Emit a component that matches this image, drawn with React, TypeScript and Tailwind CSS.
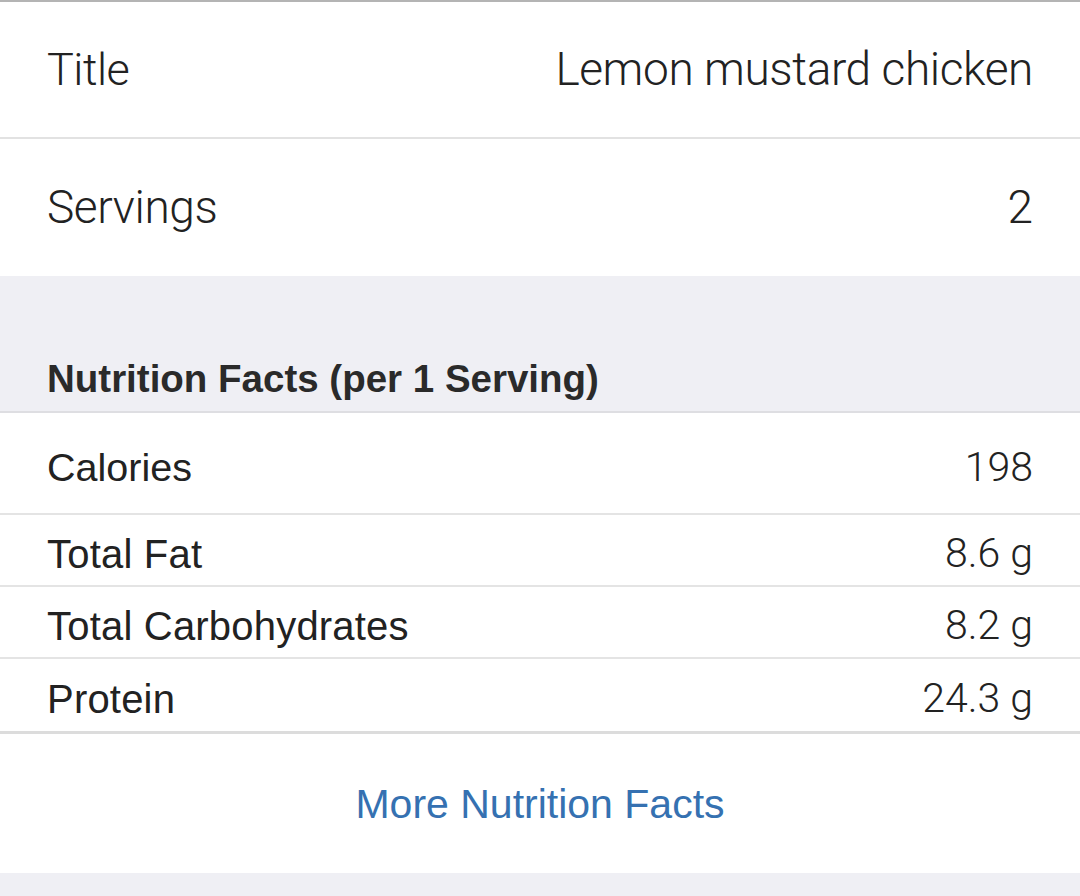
export default function App() {
  const facts = [
    { label: "Total Fat", value: "8.6 g" },
    { label: "Total Carbohydrates", value: "8.2 g" },
    { label: "Protein", value: "24.3 g" },
  ];

  return (
    <div className="w-[1080px] h-[896px] overflow-hidden bg-[#efeff4] text-[#222] font-['Liberation_Sans',Arial,sans-serif]">
      <div className="bg-white border-t-2 border-[#b4b4b4]">
        <div className="h-[137px] flex items-center justify-between px-[47px] border-b-2 border-[#e2e2e2]">
          <span className="text-[45px] font-light font-['Roboto',sans-serif] tracking-[-0.5px]">Title</span>
          <span className="text-[46px] font-light font-['Roboto',sans-serif] tracking-[-0.4px]">Lemon mustard chicken</span>
        </div>
        <div className="h-[137px] flex items-center justify-between px-[47px]">
          <span className="text-[46px] font-light font-['Roboto',sans-serif] tracking-[-0.4px]">Servings</span>
          <span className="text-[46px] font-light font-['Roboto',sans-serif]">2</span>
        </div>
      </div>

      <div className="h-[137px] flex items-end px-[47px] pb-[13px] border-b-2 border-[#dedee2]">
        <span className="text-[38.5px] font-bold text-[#2a2a2a] leading-none">Nutrition Facts (per 1 Serving)</span>
      </div>

      <div className="bg-white">
        <div className="h-[102px] flex items-center justify-between px-[47px] border-b-2 border-[#e4e4e4] pt-[10px]">
          <span className="text-[39.5px]">Calories</span>
          <span className="text-[41px] font-light font-['Roboto',sans-serif]">198</span>
        </div>
        {facts.map((f, i) => (
          <div
            key={f.label}
            className={
              i < facts.length - 1
                ? "h-[72px] flex items-center justify-between px-[47px] border-b-2 border-[#e4e4e4] pt-[8px]"
                : "h-[75px] flex items-center justify-between px-[47px] border-b-[3px] border-[#dcdcdc] pt-[8px]"
            }
          >
            <span className="text-[40px] tracking-[0.2px]">{f.label}</span>
            <span className="text-[41px] font-light font-['Roboto',sans-serif]">{f.value}</span>
          </div>
        ))}
        <div className="h-[139px] flex items-center justify-center pt-[2px]">
          <span className="text-[41px] text-[#3571b1]">More Nutrition Facts</span>
        </div>
      </div>
    </div>
  );
}
